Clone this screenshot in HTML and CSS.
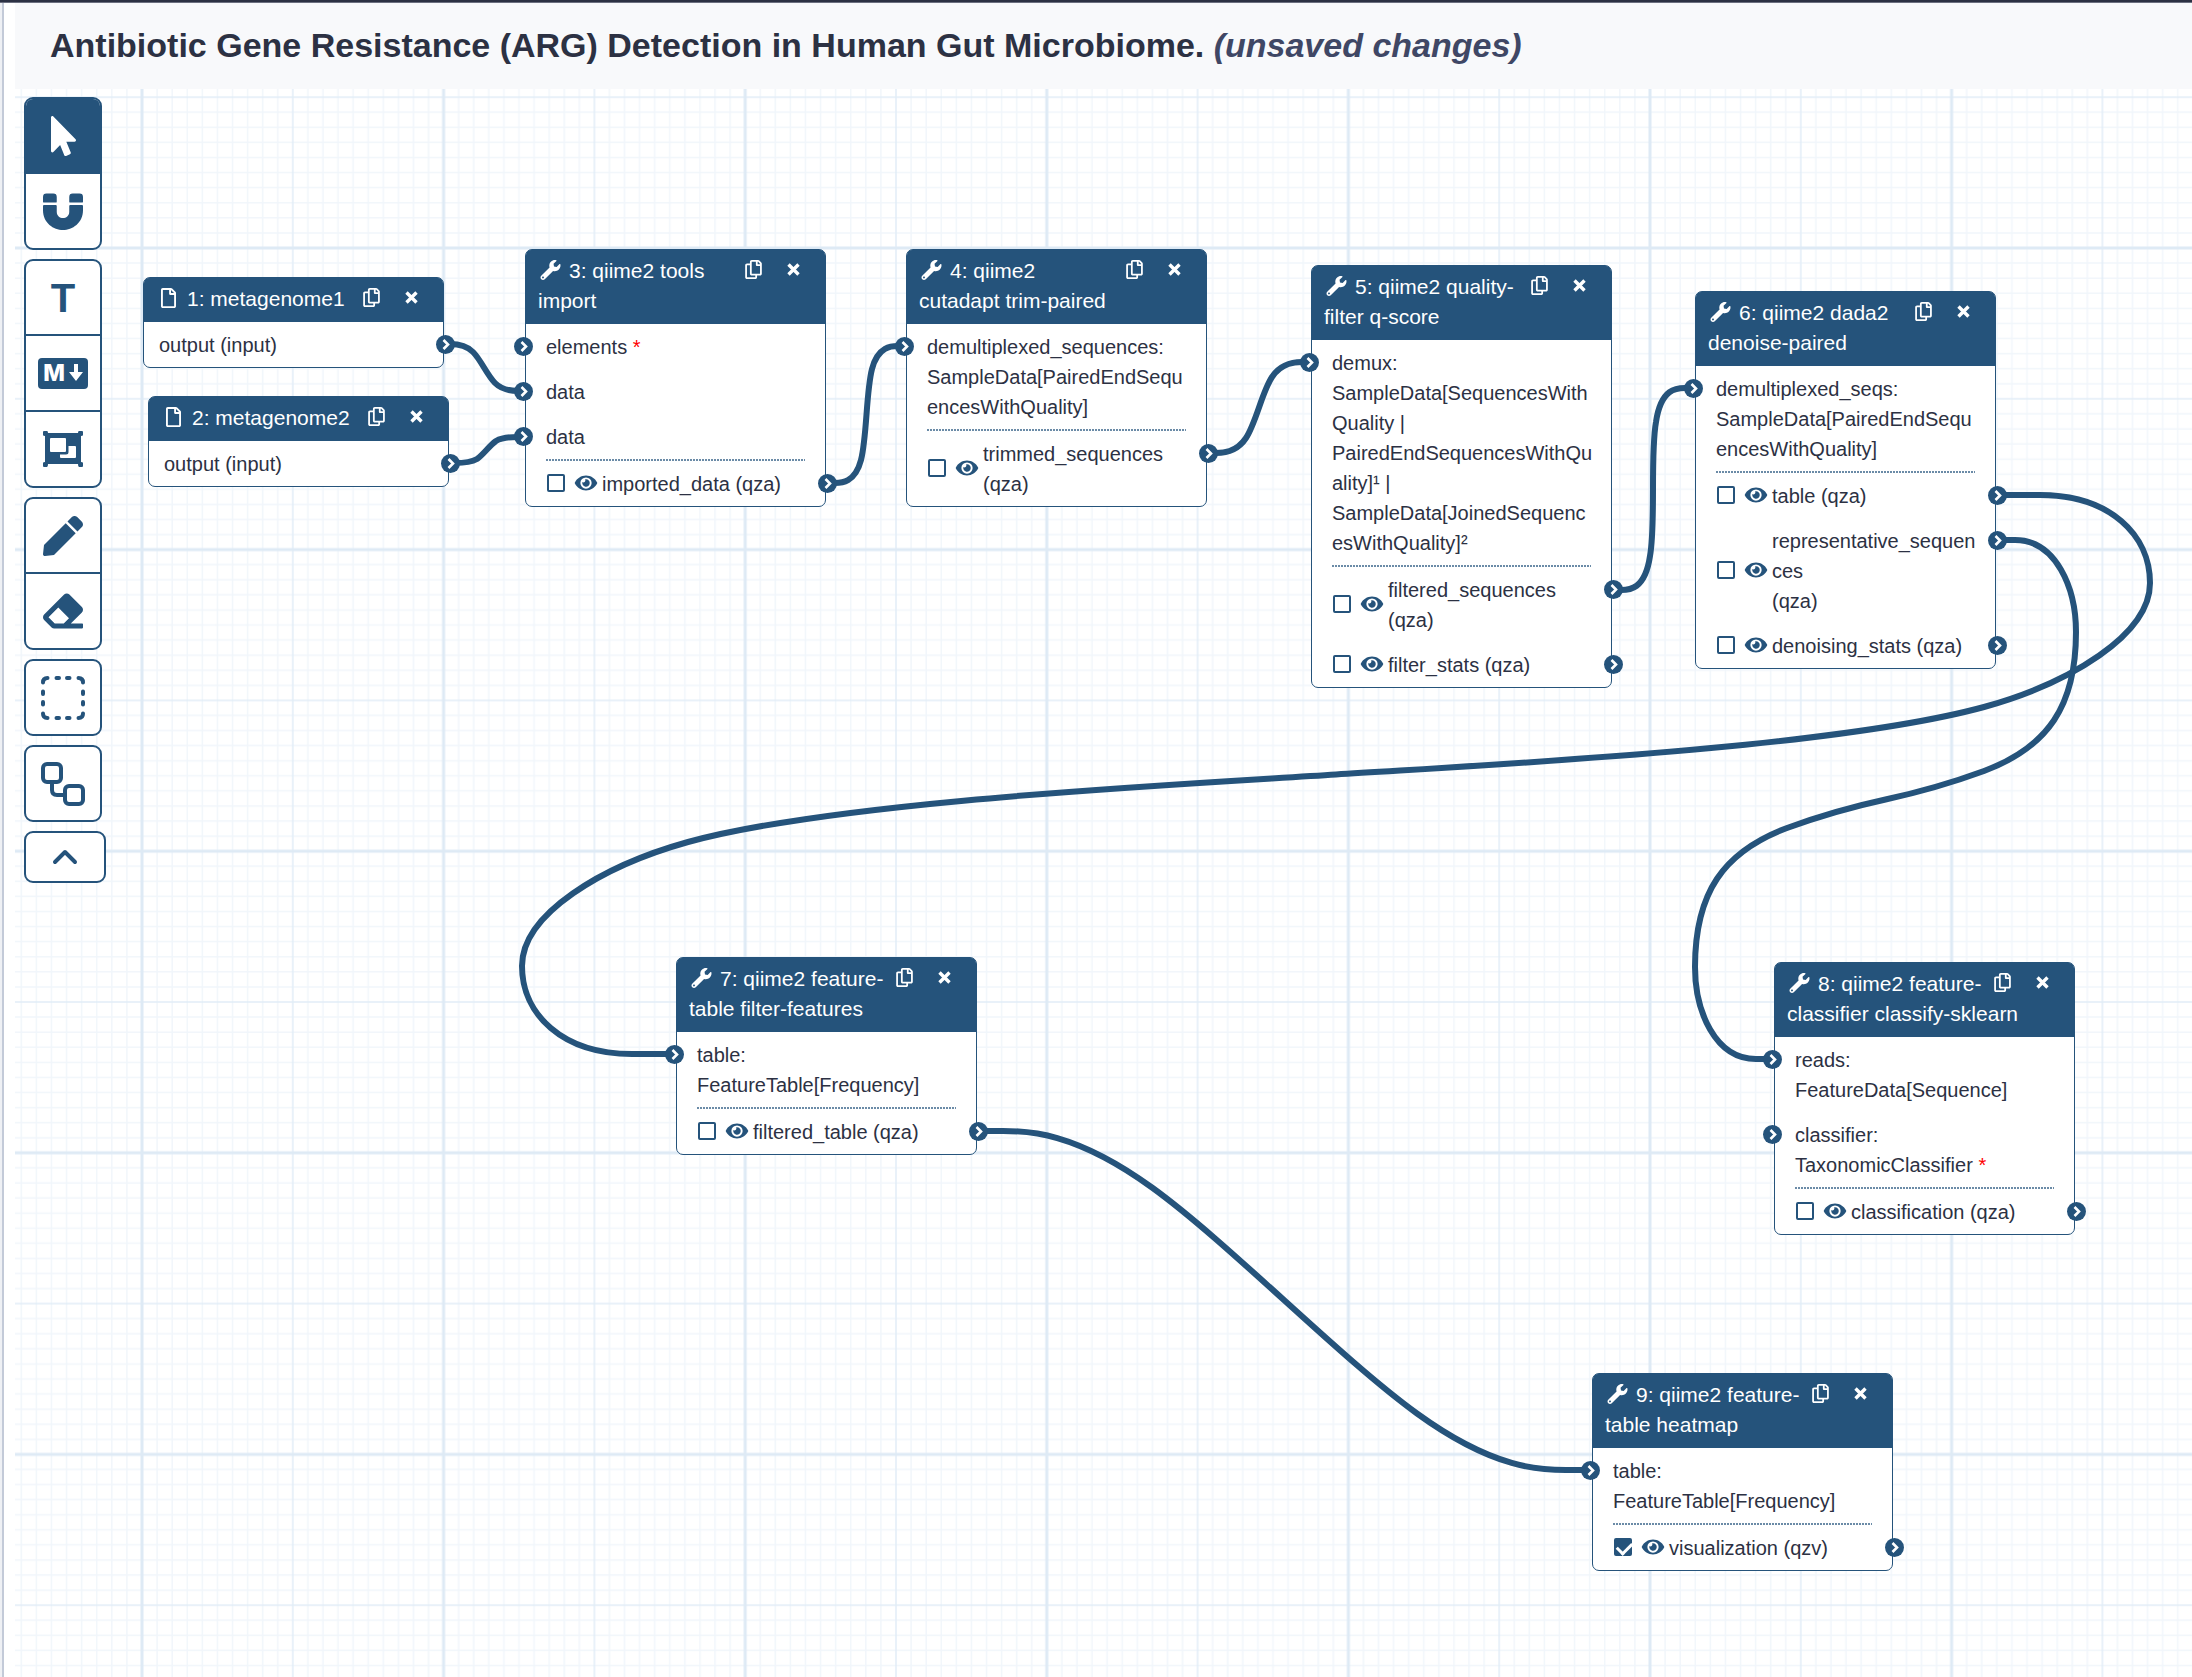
FILE: index.html
```html
<!DOCTYPE html>
<html lang="en">
<head>
<meta charset="utf-8">
<meta name="viewport" content="width=device-width, initial-scale=1">
<title>Workflow editor</title>
<link rel="stylesheet" href="styles.css">
</head>
<body>
<svg class="sprite" aria-hidden="true">
  <symbol id="wrench" viewBox="0 0 512 512"><path d="M507.73 109.1c-2.24-9.03-13.54-12.09-20.12-5.51l-74.36 74.36-67.88-11.31-11.31-67.88 74.36-74.36c6.62-6.62 3.43-17.9-5.66-20.16-47.38-11.74-99.55.91-136.58 37.93-39.64 39.64-50.55 97.1-34.05 147.2L18.74 402.76c-24.99 24.99-24.99 65.51 0 90.5 24.99 24.99 65.51 24.99 90.5 0l213.21-213.21c50.12 16.71 107.47 5.68 147.37-34.22 37.07-37.07 49.7-89.32 37.91-136.73zM64 472c-13.25 0-24-10.75-24-24 0-13.26 10.75-24 24-24s24 10.74 24 24c0 13.25-10.75 24-24 24z"/></symbol>
  <symbol id="file" viewBox="0 0 384 512"><path d="M369.9 97.9L286 14C277 5 264.8-.1 252.1-.1H48C21.5 0 0 21.5 0 48v416c0 26.5 21.5 48 48 48h288c26.5 0 48-21.5 48-48V131.9c0-12.7-5.1-25-14.1-34zM332.1 128H256V51.9l76.1 76.1zM48 464V48h160v104c0 13.3 10.7 24 24 24h104v288H48z"/></symbol>
  <symbol id="copy" viewBox="0 0 448 512"><path d="M433.941 65.941l-51.882-51.882A48 48 0 0 0 348.118 0H176c-26.51 0-48 21.49-48 48v48H48c-26.51 0-48 21.49-48 48v320c0 26.51 21.49 48 48 48h224c26.51 0 48-21.49 48-48v-48h80c26.51 0 48-21.49 48-48V99.882a48 48 0 0 0-14.059-33.941zM266 464H54a6 6 0 0 1-6-6V150a6 6 0 0 1 6-6h74v224c0 26.51 21.49 48 48 48h96v42a6 6 0 0 1-6 6zm128-96H182a6 6 0 0 1-6-6V54a6 6 0 0 1 6-6h106v88c0 13.255 10.745 24 24 24h88v202a6 6 0 0 1-6 6zm6-256h-64V48h9.632c1.591 0 3.117.632 4.243 1.757l48.368 48.368a6 6 0 0 1 1.757 4.243V112z"/></symbol>
  <symbol id="close" viewBox="0 0 12 12"><path d="M2 2L10 10M10 2L2 10" fill="none" stroke="currentColor" stroke-width="2.7"/></symbol>
  <symbol id="eye" viewBox="0 0 576 512"><path d="M572.52 241.4C518.29 135.59 410.93 64 288 64S57.68 135.64 3.48 241.41a32.35 32.35 0 0 0 0 29.19C57.71 376.41 165.07 448 288 448s230.32-71.64 284.52-177.41a32.35 32.35 0 0 0 0-29.19zM288 400a144 144 0 1 1 144-144 143.93 143.93 0 0 1-144 144zm0-240a95.31 95.31 0 0 0-25.31 3.79 47.85 47.85 0 0 1-66.9 66.9A95.78 95.78 0 1 0 288 160z"/></symbol>
  <symbol id="port" viewBox="0 0 19 19"><circle cx="9.5" cy="9.5" r="9.5"/><path d="M7.5 5L12 9.5L7.5 14" fill="none" stroke="#fff" stroke-width="2.6"/></symbol>
</svg>

<div class="topline"></div>
<main class="workspace">
  <div class="divider"></div>
  <section class="editor">
    <header class="editor-header">
      <h1>Antibiotic Gene Resistance (ARG) Detection in Human Gut Microbiome. <i>(unsaved changes)</i></h1>
    </header>

    <div class="canvas">
      <svg class="grid" aria-hidden="true">
        <defs>
          <pattern id="major" width="200" height="200" patternUnits="userSpaceOnUse" patternTransform="translate(127 159) scale(1.508)">
            <path class="grid-minor" d="M0 10H200M0 20H200M0 30H200M0 40H200M0 50H200M0 60H200M0 70H200M0 80H200M0 90H200M0 110H200M0 120H200M0 130H200M0 140H200M0 150H200M0 160H200M0 170H200M0 180H200M0 190H200M10 0V200M20 0V200M30 0V200M40 0V200M50 0V200M60 0V200M70 0V200M80 0V200M90 0V200M110 0V200M120 0V200M130 0V200M140 0V200M150 0V200M160 0V200M170 0V200M180 0V200M190 0V200"/>
            <path class="grid-mid" d="M0 100H200M100 0V200"/>
            <path class="grid-major" d="M0 0H200M0 0V200M0 200H200M200 0V200"/>
          </pattern>
        </defs>
        <rect width="100%" height="100%" fill="url(#major)"/>
      </svg>

      <svg class="links" aria-hidden="true">
        <g transform="translate(-15 -89)">
          <path d="M445 344L450 344C455 344 465 344 473 352C481 360 487 375 495 383C503 391 513 391 518 391L523 391"/>
          <path d="M450 463L455 463C460 463 470 463 477 459C484 454 489 446 496 441C503 437 513 437 518 437L523 437"/>
          <path d="M828 483L835 483C841 483 855 483 861 460C867 437 866 392 872 369C878 346 892 346 898 346L905 346"/>
          <path d="M1209 453L1216 453C1222 453 1236 453 1246 438C1256 423 1262 392 1272 377C1282 362 1296 362 1302 362L1309 362"/>
          <path d="M1613 590L1621 590C1629 590 1645 590 1650 556C1656 523 1650 455 1656 422C1661 388 1677 388 1685 388L1693 388"/>
          <path d="M1998 495H2040C2110 495 2150 535 2150 583C2150 635 2070 683 1984 707C1834 748 1500 764 1336 774.5C1172 785 838 801 688 842C602 866 522 914 522 966C522 1014 562 1054 632 1054H674"/>
          <path d="M1998 540H2015C2056 540 2076 588 2076 632C2076 706 2048 747 1984 771C1954 782 1920 792 1885.5 799.5C1851 807 1817 817 1787 828C1723 852 1695 893 1695 967C1695 1011 1715 1059 1756 1059H1773"/>
          <path d="M979 1131L1003 1131C1027 1131 1074 1131 1152 1187.5C1230 1244 1339 1357 1417 1413.5C1495 1470 1542 1470 1566 1470L1590 1470"/>
        </g>
      </svg>

      <article class="node node-1">
        <header class="node-head">
          <div class="actions"><button type="button" aria-label="Duplicate step 1"><svg class="i-copy"><use href="#copy"/></svg></button><button type="button" aria-label="Remove step 1"><svg class="i-close"><use href="#close"/></svg></button></div>
          <svg class="i-kind"><use href="#file"/></svg>1: metagenome1
        </header>
        <div class="row plain">output (input)<svg class="port out"><use href="#port"/></svg></div>
      </article>

      <article class="node node-2">
        <header class="node-head">
          <div class="actions"><button type="button" aria-label="Duplicate step 2"><svg class="i-copy"><use href="#copy"/></svg></button><button type="button" aria-label="Remove step 2"><svg class="i-close"><use href="#close"/></svg></button></div>
          <svg class="i-kind"><use href="#file"/></svg>2: metagenome2
        </header>
        <div class="row plain">output (input)<svg class="port out"><use href="#port"/></svg></div>
      </article>

      <article class="node node-3">
        <header class="node-head">
          <div class="actions"><button type="button" aria-label="Duplicate step 3"><svg class="i-copy"><use href="#copy"/></svg></button><button type="button" aria-label="Remove step 3"><svg class="i-close"><use href="#close"/></svg></button></div>
          <svg class="i-kind"><use href="#wrench"/></svg>3: qiime2 tools import
        </header>
        <div class="row"><svg class="port in"><use href="#port"/></svg>elements <span class="required">*</span></div>
        <div class="row"><svg class="port in"><use href="#port"/></svg>data</div>
        <div class="row"><svg class="port in"><use href="#port"/></svg>data</div>
        <hr>
        <div class="row output"><input type="checkbox" id="o3"><svg class="i-eye"><use href="#eye"/></svg><label for="o3">imported_data (qza)</label><svg class="port out"><use href="#port"/></svg></div>
      </article>

      <article class="node node-4">
        <header class="node-head">
          <div class="actions"><button type="button" aria-label="Duplicate step 4"><svg class="i-copy"><use href="#copy"/></svg></button><button type="button" aria-label="Remove step 4"><svg class="i-close"><use href="#close"/></svg></button></div>
          <svg class="i-kind"><use href="#wrench"/></svg>4: qiime2 cutadapt trim-paired
        </header>
        <div class="row"><svg class="port in"><use href="#port"/></svg>demultiplexed_sequences: SampleData[PairedEndSequencesWithQuality]</div>
        <hr>
        <div class="row output"><input type="checkbox" id="o4"><svg class="i-eye"><use href="#eye"/></svg><label for="o4">trimmed_sequences (qza)</label><svg class="port out"><use href="#port"/></svg></div>
      </article>

      <article class="node node-5">
        <header class="node-head">
          <div class="actions"><button type="button" aria-label="Duplicate step 5"><svg class="i-copy"><use href="#copy"/></svg></button><button type="button" aria-label="Remove step 5"><svg class="i-close"><use href="#close"/></svg></button></div>
          <svg class="i-kind"><use href="#wrench"/></svg>5: qiime2 quality-filter q-score
        </header>
        <div class="row"><svg class="port in"><use href="#port"/></svg>demux: SampleData[SequencesWithQuality | PairedEndSequencesWithQuality]¹ | SampleData[JoinedSequencesWithQuality]²</div>
        <hr>
        <div class="row output"><input type="checkbox" id="o5a"><svg class="i-eye"><use href="#eye"/></svg><label for="o5a">filtered_sequences (qza)</label><svg class="port out"><use href="#port"/></svg></div>
        <div class="row output"><input type="checkbox" id="o5b"><svg class="i-eye"><use href="#eye"/></svg><label for="o5b">filter_stats (qza)</label><svg class="port out"><use href="#port"/></svg></div>
      </article>

      <article class="node node-6">
        <header class="node-head">
          <div class="actions"><button type="button" aria-label="Duplicate step 6"><svg class="i-copy"><use href="#copy"/></svg></button><button type="button" aria-label="Remove step 6"><svg class="i-close"><use href="#close"/></svg></button></div>
          <svg class="i-kind"><use href="#wrench"/></svg>6: qiime2 dada2 denoise-paired
        </header>
        <div class="row"><svg class="port in"><use href="#port"/></svg>demultiplexed_seqs: SampleData[PairedEndSequencesWithQuality]</div>
        <hr>
        <div class="row output"><input type="checkbox" id="o6a"><svg class="i-eye"><use href="#eye"/></svg><label for="o6a">table (qza)</label><svg class="port out"><use href="#port"/></svg></div>
        <div class="row output"><input type="checkbox" id="o6b"><svg class="i-eye"><use href="#eye"/></svg><label for="o6b">representative_sequences<br>(qza)</label><svg class="port out"><use href="#port"/></svg></div>
        <div class="row output"><input type="checkbox" id="o6c"><svg class="i-eye"><use href="#eye"/></svg><label for="o6c">denoising_stats (qza)</label><svg class="port out"><use href="#port"/></svg></div>
      </article>

      <article class="node node-7">
        <header class="node-head">
          <div class="actions"><button type="button" aria-label="Duplicate step 7"><svg class="i-copy"><use href="#copy"/></svg></button><button type="button" aria-label="Remove step 7"><svg class="i-close"><use href="#close"/></svg></button></div>
          <svg class="i-kind"><use href="#wrench"/></svg>7: qiime2 feature-table filter-features
        </header>
        <div class="row"><svg class="port in"><use href="#port"/></svg>table: FeatureTable[Frequency]</div>
        <hr>
        <div class="row output"><input type="checkbox" id="o7"><svg class="i-eye"><use href="#eye"/></svg><label for="o7">filtered_table (qza)</label><svg class="port out"><use href="#port"/></svg></div>
      </article>

      <article class="node node-8">
        <header class="node-head">
          <div class="actions"><button type="button" aria-label="Duplicate step 8"><svg class="i-copy"><use href="#copy"/></svg></button><button type="button" aria-label="Remove step 8"><svg class="i-close"><use href="#close"/></svg></button></div>
          <svg class="i-kind"><use href="#wrench"/></svg>8: qiime2 feature-classifier classify-sklearn
        </header>
        <div class="row"><svg class="port in"><use href="#port"/></svg>reads: FeatureData[Sequence]</div>
        <div class="row"><svg class="port in"><use href="#port"/></svg>classifier: TaxonomicClassifier <span class="required">*</span></div>
        <hr>
        <div class="row output"><input type="checkbox" id="o8"><svg class="i-eye"><use href="#eye"/></svg><label for="o8">classification (qza)</label><svg class="port out"><use href="#port"/></svg></div>
      </article>

      <article class="node node-9">
        <header class="node-head">
          <div class="actions"><button type="button" aria-label="Duplicate step 9"><svg class="i-copy"><use href="#copy"/></svg></button><button type="button" aria-label="Remove step 9"><svg class="i-close"><use href="#close"/></svg></button></div>
          <svg class="i-kind"><use href="#wrench"/></svg>9: qiime2 feature-table heatmap
        </header>
        <div class="row"><svg class="port in"><use href="#port"/></svg>table: FeatureTable[Frequency]</div>
        <hr>
        <div class="row output"><input type="checkbox" id="o9" checked><svg class="i-eye"><use href="#eye"/></svg><label for="o9">visualization (qzv)</label><svg class="port out"><use href="#port"/></svg></div>
      </article>

      <nav class="toolbar" aria-label="Editor tools">
        <div class="tools">
          <button type="button" class="active" aria-label="Select"><svg width="25" height="40" viewBox="0 0 320 512"><path d="M302.189 329.126H196.105l55.831 135.993c3.889 9.428-.555 19.999-9.444 23.999l-49.165 21.427c-9.165 4-19.443-.571-23.332-9.714l-53.053-129.136-86.664 89.138C18.729 472.71 0 463.554 0 447.977V18.299C0 1.899 19.921-6.096 30.277 5.443l284.412 292.542c11.472 11.179 3.007 31.141-12.5 31.141z"/></svg></button>
          <button type="button" aria-label="Snap to grid"><svg width="40" height="40" viewBox="0 0 512 512"><path d="M164.07 148.1H12a12 12 0 0 1-12-12v-60a44 44 0 0 1 44-44h88a44 44 0 0 1 44 44v60a11.89 11.89 0 0 1-11.93 12zm347.93-12V76a44 44 0 0 0-44-44H380a44 44 0 0 0-44 44v60a12 12 0 0 0 12 12h152a11.89 11.89 0 0 0 12-12zm-164 44a12 12 0 0 0-12 12v72c0 108-160 108-160 0v-72a12 12 0 0 0-12-12H12a12 12 0 0 0-12 12v54C0 408 136 500 256 500S512 408 512 246v-54a12 12 0 0 0-12-12z"/></svg></button>
        </div>
        <div class="tools">
          <button type="button" class="letter">T</button>
          <button type="button" aria-label="Markdown comment"><span class="md-badge">M<svg width="14" height="18" viewBox="0 0 14 18"><path d="M5 0H9V8H14L7 17L0 8H5Z"/></svg></span></button>
          <button type="button" aria-label="Frame"><svg width="40" height="36" viewBox="0 0 40 36"><path d="M1 0H4Q5 0 5 2H35Q35 0 36 0H39Q40 0 40 1V4Q40 5 38 5V31Q40 31 40 32V35Q40 36 39 36H36Q35 36 35 33H5Q5 36 4 36H1Q0 36 0 35V32Q0 31 2 31V5Q0 5 0 4V1Q0 0 1 0Z"/><path fill="#fff" d="M8 7H22Q23 7 23 8V20Q23 21 22 21H8Q7 21 7 20V8Q7 7 8 7ZM25.500 15H32Q33 15 33 16V26Q33 27 32 27H18Q17 27 17 26V23.500H23Q25.500 23.500 25.500 21Z"/></svg></button>
        </div>
        <div class="tools">
          <button type="button" aria-label="Draw"><svg width="40" height="40" viewBox="0 0 512 512"><path d="M290.74 93.24l128.02 128.02-277.99 277.99-114.14 12.6C11.35 513.54-1.56 500.62.14 485.34l12.7-114.22 277.9-277.88zm207.2-19.06l-60.11-60.11c-18.75-18.75-49.16-18.75-67.91 0l-56.55 56.55 128.02 128.02 56.55-56.55c18.75-18.76 18.75-49.16 0-67.91z"/></svg></button>
          <button type="button" aria-label="Erase"><svg width="40" height="40" viewBox="0 0 512 512"><path d="M497.941 273.941c18.745-18.745 18.745-49.137 0-67.882l-160-160c-18.745-18.745-49.136-18.746-67.883 0l-256 256c-18.745 18.745-18.745 49.137 0 67.882l96 96A48.004 48.004 0 0 0 144 480h356c6.627 0 12-5.373 12-12v-40c0-6.627-5.373-12-12-12H355.883l142.058-142.059zm-302.627-62.627l137.373 137.373L265.373 416H150.628l-80-80 124.686-124.686z"/></svg></button>
        </div>
        <div class="tools">
          <button type="button" aria-label="Box select"><svg class="line" width="44" height="44" viewBox="0 0 44 44"><path d="M2 6.500Q2 2 6.500 2M37.500 2Q42 2 42 6.500M42 37.500Q42 42 37.500 42M6.500 42Q2 42 2 37.500M15.500 2H18M26 2H28.500M15.500 42H18M26 42H28.500M2 15.500V18M2 26V28.500M42 15.500V18M42 26V28.500"/></svg></button>
        </div>
        <div class="tools">
          <button type="button" aria-label="Auto layout"><svg class="line" width="44" height="44" viewBox="0 0 44 44"><rect x="2" y="2" width="18" height="18" rx="4"/><rect x="24" y="24" width="18" height="18" rx="4"/><path d="M11 20V28Q11 33 16 33H24"/></svg></button>
        </div>
        <div class="tools collapse">
          <button type="button" aria-label="Hide toolbar"><svg class="line" width="26" height="16" viewBox="0 0 26 16"><path d="M3 13L13 3L23 13"/></svg></button>
        </div>
      </nav>
    </div>
  </section>
</main>
</body>
</html>
```
FILE: styles.css
```css
:root {
  --brand: #25537b;
  --text: #2c3143;
}

* { box-sizing: border-box; }

body {
  margin: 0;
  min-height: 100vh;
  display: flex;
  flex-direction: column;
  background: #fff;
  color: var(--text);
  font-family: "Liberation Sans", Arial, sans-serif;
  font-size: 20px;
  line-height: 30px;
}

.sprite { display: none; }

.topline {
  height: 3px;
  background: var(--text);
  border-bottom: 1px solid #6c7080;
}

.workspace { flex: 1; display: flex; }

.divider {
  width: 15px;
  border-left: 2px solid #eef0f4;
}

.divider::before {
  content: "";
  display: block;
  width: 2px;
  height: 100%;
  background: #c3cad8;
}

.editor {
  flex: 1;
  min-width: 0;
  display: flex;
  flex-direction: column;
}

.editor-header {
  padding: 18px 35px 20px;
  background: #f8f9fb;
}

h1 {
  margin: 0;
  font-size: 34px;
  line-height: 48px;
  font-weight: 700;
}

h1 i { color: #3f4765; }

.canvas {
  flex: 1;
  position: relative;
  overflow: hidden;
}

.grid, .links {
  position: absolute;
  inset: 0;
  width: 100%;
  height: 100%;
}

.grid path { fill: none; }
.grid-minor { stroke: #f1f6fb; stroke-width: 1; }
.grid-mid { stroke: #e2edf7; stroke-width: 1; }
.grid-major { stroke: #deeaf5; stroke-width: 2; }

.links path {
  fill: none;
  stroke: var(--brand);
  stroke-width: 6;
}

/* Steps on the canvas */
.node {
  position: absolute;
  width: 301px;
  background: #fff;
  border: 1px solid var(--brand);
  border-radius: 7px;
}

.node-1 { left: 128px; top: 188px; }
.node-2 { left: 133px; top: 307px; }
.node-3 { left: 510px; top: 160px; }
.node-4 { left: 891px; top: 160px; }
.node-5 { left: 1296px; top: 176px; }
.node-6 { left: 1680px; top: 202px; }
.node-7 { left: 661px; top: 868px; }
.node-8 { left: 1759px; top: 873px; }
.node-9 { left: 1577px; top: 1284px; }

.node-head {
  padding: 6px 0 8px 12px;
  background: var(--brand);
  border-radius: 5px 5px 0 0;
  color: #fff;
  font-size: 21px;
}

.node-head svg, .tools svg, .port, .i-eye { fill: currentColor; }

.i-kind {
  width: 25px;
  height: 20px;
  margin-right: 6px;
  vertical-align: -2px;
}

.actions {
  float: right;
  display: flex;
  gap: 10px;
  margin-right: 17px;
}

.actions button {
  width: 30px;
  height: 27px;
  padding: 0;
  display: flex;
  align-items: center;
  justify-content: center;
  border: 0;
  background: none;
  color: inherit;
}

.i-copy { width: 17px; height: 19px; }
.i-close { width: 15px; height: 15px; }

.row {
  position: relative;
  padding: 8px 16px 7px 20px;
  overflow-wrap: break-word;
}

.row.plain { padding-left: 15px; }

.required { color: #f00; }

hr {
  height: 2px;
  margin: 0 20px;
  border: 0;
  background: repeating-linear-gradient(90deg, #6b8ba7 0 2px, transparent 2px 3px);
}

.port {
  position: absolute;
  top: 13px;
  width: 19px;
  height: 19px;
  color: var(--brand);
}

.port.in { left: -12px; }
.port.out { right: -12px; }

.output {
  display: flex;
  align-items: center;
}

.output label { flex: 1; min-width: 0; }

.output input {
  appearance: none;
  flex: none;
  width: 18px;
  height: 18px;
  margin: 0 9px 2px 1px;
  border: 2px solid var(--brand);
  border-radius: 2px;
  background: #fff;
}

.output input:checked { background: var(--brand); }

.output input:checked::before {
  content: "";
  display: block;
  width: 12px;
  height: 7px;
  margin: 2px 1px;
  border: solid #fff;
  border-width: 0 0 3px 3px;
  transform: rotate(-45deg);
}

.i-eye {
  flex: none;
  width: 24px;
  height: 20px;
  margin: 0 4px 2px 0;
  color: var(--brand);
}

/* Tool palette */
.toolbar {
  position: absolute;
  left: 9px;
  top: 8px;
  display: flex;
  flex-direction: column;
  align-items: flex-start;
  gap: 9px;
}

.tools {
  width: 78px;
  overflow: hidden;
  border: 2px solid var(--brand);
  border-radius: 9px;
  background: #fff;
}

.tools button {
  width: 100%;
  height: 73px;
  padding: 0;
  display: flex;
  align-items: center;
  justify-content: center;
  border: 0;
  background: none;
  color: var(--brand);
}

.tools button + button {
  height: 76px;
  border-top: 2px solid var(--brand);
}

.tools .active { background: var(--brand); color: #fff; }

.tools .letter { font: bold 40px/40px "Liberation Sans", Arial, sans-serif; }

.tools .line {
  fill: none;
  stroke: currentColor;
  stroke-width: 4;
  stroke-linecap: round;
  stroke-linejoin: round;
}

.md-badge {
  width: 50px;
  height: 31px;
  display: flex;
  align-items: center;
  justify-content: center;
  gap: 4px;
  border-radius: 4px;
  background: var(--brand);
  color: #fff;
  font: 800 23px/31px Inter, sans-serif;
}

.tools.collapse { width: 82px; }
.tools.collapse button { height: 48px; }
```
